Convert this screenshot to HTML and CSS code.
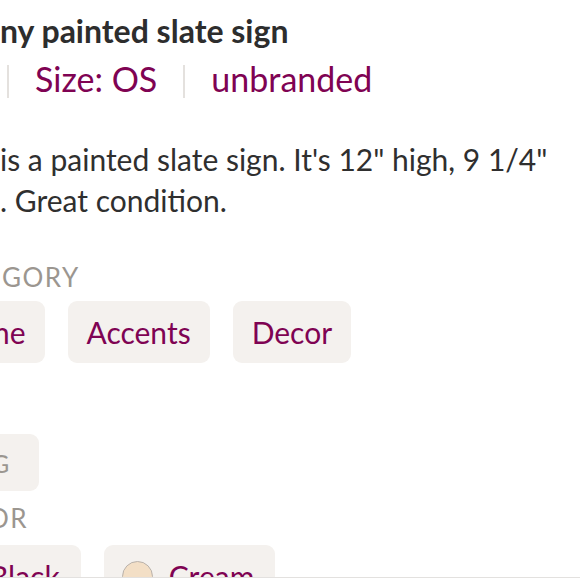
FILE: index.html
```html
<!DOCTYPE html>
<html lang="en">
<head>
<meta charset="utf-8">
<title>Listing</title>
<link rel="stylesheet" href="styles.css">
</head>
<body>
<main class="listing">
  <h1 class="title">ny painted slate sign</h1>
  <div class="meta">
    <span class="sep"></span>
    <span class="meta-item">Size: OS</span>
    <span class="sep"></span>
    <span class="meta-item">unbranded</span>
  </div>
  <p class="desc">is a painted slate sign. It's 12" high, 9 1/4"<br>. Great condition.</p>

  <section class="attr attr-category">
    <h2 class="label label-category">GORY</h2>
    <div class="chips chips-category">
      <span class="chip">me</span>
      <span class="chip">Accents</span>
      <span class="chip">Decor</span>
    </div>
  </section>

  <section class="attr attr-tags">
    <div class="chips chips-tags">
      <span class="chip chip-tag">G</span>
    </div>
  </section>

  <section class="attr attr-color">
    <h2 class="label label-color">OR</h2>
    <div class="chips chips-color">
      <span class="chip chip-color">Black</span>
      <span class="chip chip-color"><span class="swatch swatch-cream"></span>Cream</span>
    </div>
  </section>
</main>
<div class="bottom-bar"></div>
</body>
</html>
```

FILE: styles.css
```css
html, body {
  margin: 0;
  padding: 0;
  background: #ffffff;
  overflow: hidden;
}
body {
  width: 580px;
  height: 579px;
  font-family: Lato, "Noto Sans", sans-serif;
  color: #2f2f2f;
}
.listing {
  display: flex;
  flex-direction: column;
  padding-top: 13px;
}
.title {
  margin: 0;
  font-size: 32px;
  font-weight: 700;
  line-height: 36px;
  color: #2d2d2d;
  white-space: nowrap;
}
.meta {
  display: flex;
  align-items: center;
  gap: 26px;
  margin-top: 10px;
  margin-left: 7px;
  height: 40px;
}
.sep {
  width: 2px;
  height: 33px;
  margin-top: 4px;
  background: #e4e1de;
}
.meta-item {
  font-size: 34px;
  line-height: 40px;
  color: #7f0353;
}
.desc {
  margin: 40px 0 0 0;
  font-size: 30px;
  line-height: 41px;
  color: #2f2f2f;
  white-space: nowrap;
}
.attr {
  display: flex;
  flex-direction: column;
}
.label {
  margin: 0;
  font-size: 26px;
  font-weight: 400;
  line-height: 28px;
  letter-spacing: 1.5px;
  color: #9b9690;
  white-space: nowrap;
}
.attr-category { margin-top: 42px; }
.label-category { margin-left: 2px; }
.chips {
  display: flex;
  gap: 23px;
  margin-top: 10px;
}
.chip {
  flex: none;
  display: flex;
  align-items: center;
  gap: 16px;
  height: 62px;
  padding: 0 19px;
  border-radius: 9px;
  background: #f4f1ee;
  font-size: 30px;
  color: #7f0353;
  white-space: nowrap;
}
.chips-category { margin-left: -34px; }
.attr-tags { margin-top: 71px; }
.chips-tags { margin-top: 0; margin-left: -29px; }
.chip-tag {
  height: 57px;
  font-size: 25px;
  color: #9b9690;
  padding: 0 30px 0 20px;
}
.attr-color { margin-top: 13px; }
.label-color { margin-left: -12px; }
.chips-color { margin-top: 13px; margin-left: -29px; }
.chip-color { padding-left: 18px; padding-right: 21px; }
.swatch {
  flex: none;
  width: 29px;
  height: 29px;
  border-radius: 50%;
  border: 1px solid #b9b2ab;
}
.swatch-cream { background: #f3dfc6; }
.bottom-bar {
  position: fixed;
  left: 0;
  right: 0;
  bottom: 0;
  height: 1px;
  border-top: 1px solid #e3e1df;
  background: #ffffff;
}
```
